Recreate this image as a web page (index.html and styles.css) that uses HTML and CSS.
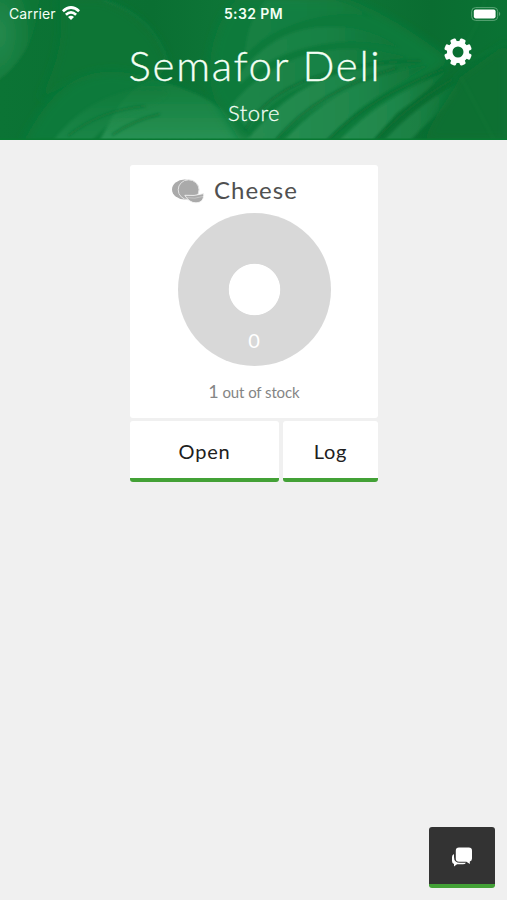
FILE: index.html
```html
<!DOCTYPE html>
<html lang="en">
<head>
<meta charset="utf-8">
<title>Semafor Deli</title>
<link rel="stylesheet" href="styles.css">
</head>
<body>
<header class="header">
  <svg class="foliage" viewBox="0 0 507 140" preserveAspectRatio="none" aria-hidden="true">
    <defs>
      <linearGradient id="base"><stop offset="0" stop-color="#0b7435"/><stop offset=".3" stop-color="#0a6f32"/><stop offset=".55" stop-color="#107a3b"/><stop offset=".85" stop-color="#0a6d31"/><stop offset="1" stop-color="#0a7334"/></linearGradient>
      <linearGradient id="leaf" x1="0" y1="0" x2="0" y2="1"><stop offset="0" stop-color="#0f7b3a"/><stop offset="1" stop-color="#2b9356"/></linearGradient>
      <linearGradient id="fade" x1="0" x2="1"><stop offset="0" stop-color="#268d51"/><stop offset=".55" stop-color="#1e864a"/><stop offset="1" stop-color="#0c7234"/></linearGradient>
      <radialGradient id="corner" cx=".1" cy=".45" r=".8"><stop offset="0" stop-color="#24894d"/><stop offset="1" stop-color="#0d7636"/></radialGradient>
      <filter id="soft" x="-10%" y="-10%" width="120%" height="120%"><feGaussianBlur stdDeviation="1.6"/></filter>
      <filter id="haze" x="-20%" y="-20%" width="140%" height="140%"><feGaussianBlur stdDeviation="5"/></filter>
    </defs>
    <rect width="507" height="140" fill="url(#base)"/>
    <path d="M-5-5H39C38 34 23 64-5 82Z" fill="url(#corner)" filter="url(#soft)"/>
    <path d="M58 0H103C137 12 158 34 168 65L152 86Q90 66 40 100Q70 40 58 0Z" fill="#0b7535" filter="url(#haze)"/>
    <path d="M103 0Q155 16 168 64" fill="none" stroke="#1b7e43" stroke-width="1.2" filter="url(#soft)"/>
    <path d="M22 145C46 98 72 68 120 72C180 80 226 108 253 145Z" fill="#107a3b" filter="url(#haze)"/>
    <path d="M98 145C114 110 128 88 152 80C200 90 237 113 255 145Z" fill="url(#leaf)" filter="url(#soft)"/>
    <path d="M50 145Q84 96 150 86Q190 90 140 110Q110 118 88 145Z" fill="url(#leaf)" opacity=".5" filter="url(#soft)"/>
    <path d="M68 136Q100 110 145 106M112 135Q134 120 160 114" fill="none" stroke="#0d7536" stroke-width="2" filter="url(#soft)"/>
    <path d="M215 100C204 70 212 25 236 0H350C390 16 425 40 450 60C420 82 390 110 360 140H240Z" fill="#107a3b" filter="url(#haze)"/>
    <g fill="url(#fade)" filter="url(#soft)">
      <path d="M266 0H335Q356 5 374 18Q338 8 294 24Q265 34 245 55Q247 20 266 0Z" opacity=".35"/>
      <path d="M240 73Q278 25 330 27Q370 26 400 48Q354 35 309 47Q270 55 240 84Z" opacity=".6"/>
      <path d="M230 107Q270 57 333 50Q370 46 410 58Q345 61 304 85Q270 99 248 129Z" opacity=".65"/>
      <path d="M244 144Q292 82 350 71Q385 63 420 63Q365 78 327 101Q299 116 272 144Z"/>
      <path d="M281 144Q321 98 370 80Q400 70 429 65Q387 89 357 111L323 144Z"/>
      <path d="M336 144Q370 108 409 89L448 70Q425 94 397 113L370 144Z"/>
      <path d="M381 144Q412 109 456 84L459 99Q436 112 407 144Z" opacity=".7"/>
    </g>
    <path d="M245 130Q268 90 325 74Q369 61 421 61M276 140Q318 90 397 68M328 140Q373 95 444 69M376 140Q405 107 453 79" fill="none" stroke="#0a6d31" stroke-width="2.2" filter="url(#soft)"/>
    <path d="M424 140C440 105 455 91 459 78L507 43V140Z" fill="#0b7033" filter="url(#haze)"/>
    <path d="M461 77L494 140M463 48Q478 28 485 0M470 60L507 43" fill="none" stroke="#19803d" stroke-width="2" opacity=".25" filter="url(#soft)"/>
    <rect y="138.5" width="507" height="1.5" fill="#087832"/>
  </svg>

  <div class="status">
    <div class="network">
      <span class="carrier">Carrier</span>
      <svg class="wifi" width="18" height="14" viewBox="0 0 18 14" fill="none" stroke="#fff" stroke-width="2.7"><path d="M.9 5.3Q9-2.3 17.1 5.3"/><path d="M3.9 8.7Q9 4 14.1 8.7"/><path d="M9 13.9L6 10.9Q9 8.4 12 10.9Z" fill="#fff" stroke="none"/></svg>
    </div>
    <span class="clock">5:32 PM</span>
    <svg class="battery" width="30" height="14" viewBox="0 0 30 14"><rect x=".7" y=".6" width="26" height="12.8" rx="3.8" fill="none" stroke="#5aa576"/><rect x="2.8" y="2.6" width="21.8" height="8.8" rx="1.8" fill="#fff"/><path d="M28 4.8Q30.5 7 28 9.2Z" fill="#5aa576"/></svg>
  </div>
  <h1 class="title">Semafor Deli</h1>
  <p class="subtitle">Store</p>
  <button class="settings" aria-label="Settings">
    <svg width="28" height="28" viewBox="-14 -14 28 28" fill="#fff">
      <path fill-rule="evenodd" d="M-11 0A11 11 0 1 0 11 0A11 11 0 1 0-11 0ZM-5.5 0A5.5 5.5 0 1 1 5.5 0A5.5 5.5 0 1 1-5.5 0Z"/>
      <g id="teeth"><rect x="-3" y="-13.9" width="6" height="5.5" rx="1.5" transform="rotate(22.5)"/><rect x="-3" y="-13.9" width="6" height="5.5" rx="1.5" transform="rotate(67.5)"/><rect x="-3" y="-13.9" width="6" height="5.5" rx="1.5" transform="rotate(112.5)"/><rect x="-3" y="-13.9" width="6" height="5.5" rx="1.5" transform="rotate(157.5)"/></g>
      <use href="#teeth" transform="rotate(180)"/>
    </svg>
  </button>
</header>

<main class="store">
  <section class="card">
    <div class="product">
      <svg class="cheese" width="34" height="26" viewBox="0 0 34 26" fill="#aaa"><ellipse cx="12.6" cy="11.5" rx="12.6" ry="10"/><ellipse cx="16.6" cy="11.8" rx="10.4" ry="10" stroke="#e4e4e4"/><path d="M12.8 17.3Q22 18.4 31.7 15.6C31.8 21 30 24.6 24 24.8Q17.5 25 12.8 17.3Z" stroke="#f4f4f4" stroke-width=".9"/><path d="M14.5 19.6Q23 21.4 31 18.4" fill="none" stroke="#d0d0d0" stroke-width=".7"/></svg>
      <h2 class="name">Cheese</h2>
    </div>
    <div class="ring"><span class="count">0</span></div>
    <p class="stock"><span class="amount">1</span> out of stock</p>
  </section>
  <div class="actions">
    <button class="action open">Open</button>
    <button class="action log">Log</button>
  </div>
</main>

<button class="chat" aria-label="Chat">
  <svg width="22" height="20" viewBox="0 0 22 20" fill="#fff"><path d="M3 7Q1 8 1 10V14Q1 16.5 3 17V19.5L6 17.3H12Q14 17.3 15 15.8H9Q3 15.8 3 10Z"/><path d="M8 .5H17.8Q21 .5 21 3.7V11.5Q21 14 18.8 14.4V17L15.4 14.7H8Q4.8 14.7 4.8 11.5V3.7Q4.8.5 8 .5Z"/></svg>
</button>
</body>
</html>
```

FILE: styles.css
```css
* { box-sizing: border-box; }

body {
  margin: 0;
  min-height: 900px;
  background: #f0f0f0;
  font-family: Lato, "Liberation Sans", sans-serif;
  color: #555;
}

h1, h2, p { margin: 0; font-weight: 400; }
svg { display: block; }
button { border: 0; padding: 0; font: inherit; }

.header {
  position: relative;
  height: 140px;
  overflow: hidden;
  color: #f4fff5;
  text-align: center;
}

.foliage { position: absolute; inset: 0; width: 100%; height: 100%; }

.status {
  position: relative;
  display: grid;
  grid-template-columns: 1fr auto 1fr;
  align-items: center;
  height: 28px;
  padding: 0 7px 0 9px;
  font-family: Inter, sans-serif;
}
.network { display: flex; align-items: center; gap: 6px; }
.carrier { margin-top: -2px; font-size: 14px; letter-spacing: .1px; }
.wifi { margin-top: -2px; }
.clock { margin: -1px 2px 0 0; font-size: 14px; font-weight: 600; letter-spacing: .4px; }
.battery { justify-self: end; margin: -1px -1px 0 0; }

.title {
  position: relative;
  margin-top: 11px;
  padding-left: 3px;
  font-size: 42px;
  font-weight: 300;
  line-height: 52px;
  letter-spacing: 1.7px;
  -webkit-text-stroke: .3px currentColor;
}
.subtitle {
  position: relative;
  margin-top: 8px;
  padding-left: 1px;
  font-size: 22px;
  font-weight: 300;
  line-height: 28px;
  letter-spacing: .5px;
  -webkit-text-stroke: .3px currentColor;
}
.settings {
  position: absolute;
  top: 38px;
  right: 35px;
  background: none;
}

.store { width: 248px; margin: 25px 0 0 130px; }
.card {
  height: 253px;
  padding-top: 10px;
  border-radius: 3px;
  background: #fff;
}
.product { display: flex; align-items: center; height: 30px; padding-left: 42px; }
.cheese { margin-top: 2px; }
.name { margin-left: 8px; font-size: 24px; line-height: 30px; letter-spacing: 1px; color: #505050; }
.ring {
  display: flex;
  align-items: flex-end;
  justify-content: center;
  width: 153px;
  height: 153px;
  margin: 8px 0 0 47.5px;
  padding-bottom: 14px;
  border-radius: 50%;
  background: radial-gradient(circle at 50% 50%, #fff 25.3px, #d8d8d8 26.1px);
}
.count { font-size: 20px; line-height: 24px; color: #fff; }
.stock { margin-top: 13px; font-size: 15px; line-height: 24px; letter-spacing: -.1px; text-align: center; color: #858585; }
.amount { font-size: 18px; }

.actions { display: grid; grid-template-columns: 149px 95px; gap: 4px; margin-top: 3px; }
.action {
  height: 61px;
  padding-top: 2px;
  border-bottom: 4px solid #43a136;
  border-radius: 3px;
  background: #fff;
  color: #202020;
  font-size: 20px;
  letter-spacing: .8px;
}

.chat {
  position: fixed;
  right: 12px;
  bottom: 12px;
  display: grid;
  place-items: center;
  width: 66px;
  height: 61px;
  border-bottom: 4px solid #43a136;
  border-radius: 3px;
  background: #333;
}
.chat svg { margin-top: 2px; }
```
